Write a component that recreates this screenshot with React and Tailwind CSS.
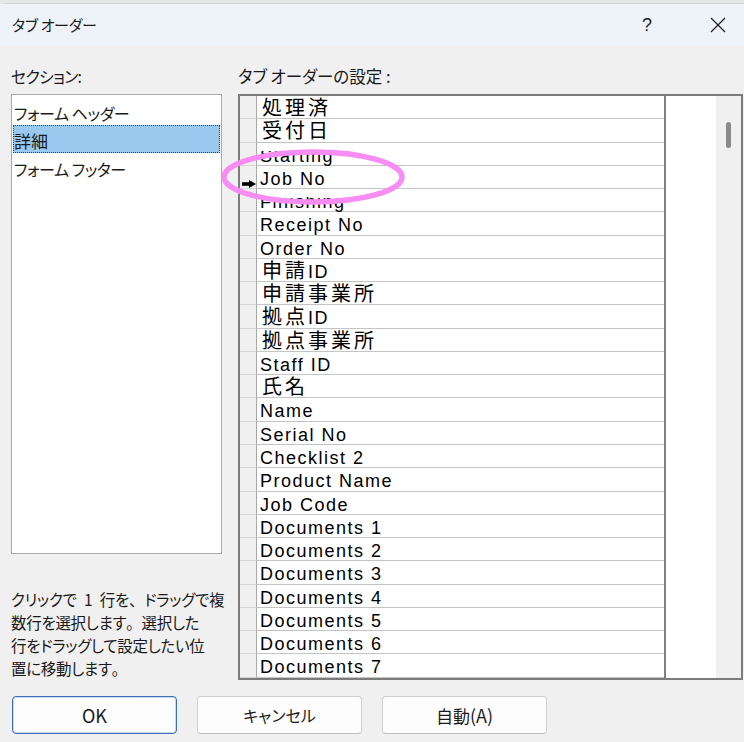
import React from "react";

const rows = [
  "処理済",
  "受付日",
  "Starting",
  "Job No",
  "Finishing",
  "Receipt No",
  "Order No",
  "申請ID",
  "申請事業所",
  "拠点ID",
  "拠点事業所",
  "Staff ID",
  "氏名",
  "Name",
  "Serial No",
  "Checklist 2",
  "Product Name",
  "Job Code",
  "Documents 1",
  "Documents 2",
  "Documents 3",
  "Documents 4",
  "Documents 5",
  "Documents 6",
  "Documents 7",
];

const clipped = { Starting: true, Finishing: true };
const isCjk = (s) => /[\u3000-\u9fff]/.test(s);

function Cell({ text }) {
  const parts = text.match(/[\u3000-\u9fff]+|[^\u3000-\u9fff]+/g) || [];
  return (
    <span className="whitespace-pre">
      {parts.map((p, i) =>
        isCjk(p) ? (
          <span
            key={i}
            className={
              i === 0
                ? "ml-[2px] font-['Noto_Sans_CJK_JP',sans-serif] text-[20px] tracking-[3px]"
                : "font-['Noto_Sans_CJK_JP',sans-serif] text-[20px] tracking-[3px]"
            }
          >
            {p}
          </span>
        ) : (
          <span
            key={i}
            className="font-['Liberation_Sans',Arial,sans-serif] text-[18px] tracking-[1.5px]"
          >
            {p}
          </span>
        )
      )}
    </span>
  );
}

function Arrow() {
  return (
    <svg width="14" height="8" viewBox="0 0 14 8">
      <rect x="0" y="2.2" width="8" height="3.6" fill="#000" />
      <polygon points="7,0 14,4 7,8" fill="#000" />
    </svg>
  );
}

function P({ children }) {
  return <span className="[font-feature-settings:normal]">{children}</span>;
}

export default function App() {
  return (
    <div className="relative h-[742px] w-[744px] overflow-hidden bg-[#e6e6e6] font-['Noto_Sans_CJK_JP',sans-serif] text-[#1a1a1a] [font-feature-settings:'palt']">
      <div className="mt-[3px] flex h-[739px] flex-col rounded-tl-[8px] border-t border-[#d2d2d2] bg-[#f0f0f0]">
        {/* title bar */}
        <div className="flex h-[42px] items-center bg-[#eef2f9] pb-[1px] pl-[12px]">
          <span className="text-[15px] leading-none tracking-[-0.3px]">タブ オーダー</span>
          <span className="ml-auto font-['Liberation_Sans',sans-serif] text-[18px] font-light leading-none text-[#222]">
            ?
          </span>
          <div className="ml-[58px] mr-[18px] flex h-[16px] w-[16px] items-center justify-center">
            <svg width="16" height="16" viewBox="0 0 16 16">
              <line x1="1" y1="1" x2="15" y2="15" stroke="#222" strokeWidth="1.3" />
              <line x1="15" y1="1" x2="1" y2="15" stroke="#222" strokeWidth="1.3" />
            </svg>
          </div>
        </div>

        {/* body */}
        <div className="mt-[19px] flex pl-[11px]">
          {/* left column */}
          <div className="flex w-[211px] flex-col">
            <div className="h-[22px] text-[16px] leading-[22px] tracking-[-0.8px]">セクション:</div>
            <div className="mt-[7px] h-[460px] border border-[#a9a9a9] bg-white pt-[2px]">
              <div className="mx-[1px] h-[28px] border border-transparent pt-[3px] text-[16px] leading-[24px] tracking-[-0.4px]">
                フォーム ヘッダー
              </div>
              <div className="mx-[1px] h-[28px] border border-dotted border-[#3a3a3a] bg-[#99c9ef] pt-[3px] text-[17px] leading-[24px]">
                詳細
              </div>
              <div className="mx-[1px] h-[28px] border border-transparent pt-[3px] text-[16px] leading-[24px] tracking-[-0.4px]">
                フォーム フッター
              </div>
            </div>
            <div className="mt-[34px] whitespace-nowrap text-[15.5px] leading-[23px] tracking-[-0.3px]">
              クリックで{"\u2002"}1{"\u2002"}行を<P>、</P>ドラッグで複
              <br />
              数行を選択します<P>。</P>選択した
              <br />
              行をドラッグして設定したい位
              <br />
              置に移動します<P>。</P>
            </div>
          </div>

          {/* right column */}
          <div className="ml-[16px] flex flex-col">
            <div className="h-[22px] text-[16.5px] leading-[22px]">タブ オーダーの設定 :</div>
            <div className="mt-[7px] flex h-[586px] w-[505px] border-2 border-[#7c7c7c] bg-white">
              <div className="flex w-[424px] flex-col overflow-hidden">
                {rows.map((r) => (
                  <div key={r} className="flex h-[23.28px] shrink-0">
                    <div className="flex w-[17px] shrink-0 items-end justify-end border-r border-b border-r-[#a8a8a8] border-b-[#d6d6d6] bg-[#f0f0f0]">
                      {r === "Job No" ? <Arrow /> : null}
                    </div>
                    <div
                      className={
                        isCjk(r)
                          ? "relative flex-1 border-b border-[#c4c4c4] pl-[3px] pt-[1px] leading-[20px] text-black"
                          : "relative flex-1 border-b border-[#c4c4c4] pl-[3px] pt-[2px] leading-[20px] text-black"
                      }
                    >
                      <Cell text={r} />
                      {clipped[r] ? (
                        <div className="absolute left-0 top-0 h-[8px] w-[110px] bg-white" />
                      ) : null}
                    </div>
                  </div>
                ))}
              </div>
              <div className="w-[52px] border-l-2 border-[#808080] bg-white" />
              <div className="flex w-[25px] justify-center bg-[#f0f0f0] pt-[26px]">
                <div className="h-[26px] w-[5px] rounded-full bg-[#8a8a8a]" />
              </div>
            </div>
          </div>
        </div>

        {/* buttons */}
        <div className="mt-[16px] flex gap-[20px] pl-[12px]">
          <button className="h-[38px] w-[165px] rounded-[4px] border border-[#3c70b6] bg-[#fdfdfd] text-[18px] text-[#1b1b1b] shadow-[inset_0_0_0_1px_#c9d9ee]">
            OK
          </button>
          <button className="h-[38px] w-[165px] rounded-[4px] border border-[#d0d0d0] border-b-[#bdbdbd] bg-[#fdfdfd] text-[16px] text-[#1b1b1b]">
            キャンセル
          </button>
          <button className="h-[38px] w-[165px] rounded-[4px] border border-[#d0d0d0] border-b-[#bdbdbd] bg-[#fdfdfd] text-[17px] text-[#1b1b1b]">
            自動<span className="text-[18px]">(A)</span>
          </button>
        </div>
      </div>

      {/* annotation ellipse */}
      <svg
        className="pointer-events-none absolute left-0 top-0"
        width="744"
        height="742"
        viewBox="0 0 744 742"
      >
        <ellipse cx="313" cy="177" rx="89" ry="25" fill="none" stroke="#f78cf2" strokeWidth="5.5" />
      </svg>
    </div>
  );
}
